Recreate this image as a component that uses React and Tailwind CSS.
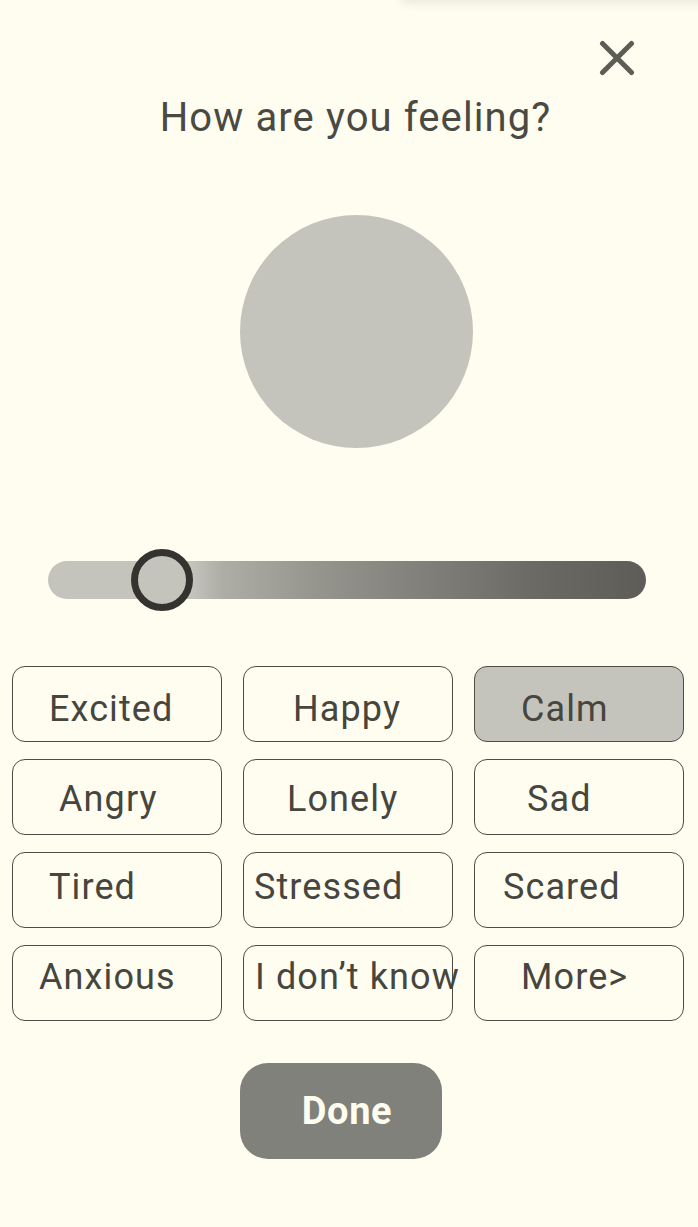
import React, { useState } from 'react';

const moods = [
  { label: 'Excited', pad: 'pl-[36px] pt-[9px]' },
  { label: 'Happy', pad: 'pl-[49px] pt-[9px]' },
  { label: 'Calm', pad: 'pl-[46px] pt-[9px]' },
  { label: 'Angry', pad: 'pl-[46px] pt-[3px]' },
  { label: 'Lonely', pad: 'pl-[43px] pt-[3px]' },
  { label: 'Sad', pad: 'pl-[52px] pt-[3px]' },
  { label: 'Tired', pad: 'pl-[36px] pb-[6px]' },
  { label: 'Stressed', pad: 'pl-[10px] pb-[6px]' },
  { label: 'Scared', pad: 'pl-[28px] pb-[6px]' },
  { label: 'Anxious', pad: 'pl-[26px] pb-[13px]' },
  { label: 'I don’t know', pad: 'pl-[11px] pb-[13px]' },
  { label: 'More>', pad: 'pl-[46px] pb-[13px]' },
];

const CloseIcon = () => (
  <svg width="36" height="36" viewBox="0 0 36 36" fill="none">
    <path d="M3.5 3.5 L32.5 32.5 M32.5 3.5 L3.5 32.5" stroke="#5d5c55" strokeWidth="5" strokeLinecap="round" />
  </svg>
);

const App = () => {
  const [selected, setSelected] = useState('Calm');

  return (
    <div
      className="relative min-h-screen w-full overflow-hidden bg-[#fefdf0] text-[#46453e]"
      style={{ fontFamily: 'Roboto, "Noto Sans", sans-serif' }}
    >
      <div className="absolute right-[-20px] top-[-24px] h-6 w-[320px] rounded-full shadow-[0_4px_10px_rgba(0,0,0,0.08)]" />

      <div className="flex justify-end pr-[63px] pt-[40px]">
        <button className="h-[36px] w-[36px]">
          <CloseIcon />
        </button>
      </div>

      <h1 className="mt-[19px] pl-[13px] text-center text-[40px] leading-[46px] font-normal tracking-[1.1px] text-[#4a4942]">
        How are you feeling?
      </h1>

      <div className="mt-[74px] flex justify-center">
        <div className="ml-[14px] h-[233px] w-[233px] rounded-full bg-[#c4c4bc]" />
      </div>

      <div className="mt-[101px] pl-[48px] pr-[52px]">
        <div className="relative flex h-[62px] items-center">
          <div className="h-[38px] w-full rounded-full bg-[linear-gradient(to_right,#c4c4bc_0%,#c4c4bc_24%,#aeada6_29%,#95948d_45%,#7e7d77_65%,#6a6963_82%,#5d5c56_100%)]" />
          <div className="absolute left-[83px] top-0 h-[62px] w-[62px] rounded-full border-[7px] border-[#34332f] bg-[#c4c4bc]" />
        </div>
      </div>

      <div className="mt-[55px] grid grid-cols-[210px_210px_210px] gap-x-[21px] gap-y-[17px] px-[12px]">
        {moods.map((m) => (
          <button
            key={m.label}
            onClick={() => setSelected(m.label)}
            className={`flex h-[76px] items-center whitespace-nowrap rounded-[13px] border-[1.5px] border-[#4d4c45] text-left text-[36px] leading-none tracking-[1.1px] ${m.pad} ${
              selected === m.label ? 'bg-[#c4c4bc]' : 'bg-transparent'
            }`}
          >
            {m.label}
          </button>
        ))}
      </div>

      <div className="mt-[42px] flex justify-center">
        <button className="ml-[-16px] flex h-[96px] w-[202px] items-center justify-center rounded-[28px] bg-[#81817b] pl-[12px] text-[38px] font-bold tracking-[0.6px] text-[#fefdf0]">
          Done
        </button>
      </div>
    </div>
  );
};

export default App;
